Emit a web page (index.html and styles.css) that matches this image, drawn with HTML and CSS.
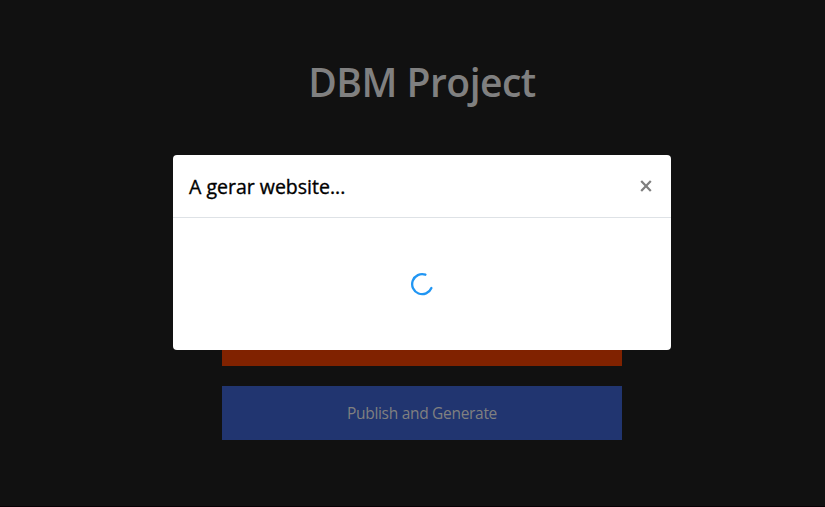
FILE: index.html
```html
<!DOCTYPE html>
<html lang="pt">
<head>
<meta charset="utf-8">
<title>DBM Project</title>
<link rel="stylesheet" href="styles.css">
</head>
<body>
<main class="page">
  <h1 class="title"><span>DBM Project</span></h1>
  <div class="actions">
    <button class="btn btn-generate" aria-label="Generate"></button>
    <button class="btn btn-publish"><span>Publish and Generate</span></button>
  </div>
</main>
<div class="overlay">
  <section class="modal" role="dialog">
    <header class="modal-header">
      <h2 class="modal-title"><span>A gerar website...</span></h2>
      <button class="close" aria-label="Close">
        <svg width="12" height="12" viewBox="0 0 12 12"><path d="M1.2 .9 10.8 11.1M10.8 .9 1.2 11.1" fill="none" stroke="#7f7f7f" stroke-width="2.2"/></svg>
      </button>
    </header>
    <div class="modal-body">
      <svg width="24" height="24" viewBox="0 0 24 24"><path d="M15.4 2.7A10 10 0 1 0 21.4 16" fill="none" stroke="#2196f3" stroke-width="2.3" stroke-linecap="round"/></svg>
    </div>
  </section>
</div>
</body>
</html>
```
FILE: styles.css
```css
* { box-sizing: border-box; }
html { overflow: hidden; }
body {
  margin: 0;
  height: 507px;
  overflow: hidden;
  background: #111;
  border-bottom: 1px solid #080004;
  font-family: "Open Sans", "Noto Sans", sans-serif;
}
.page {
  width: 844px;
  display: flex;
  flex-direction: column;
  align-items: center;
}
.title {
  margin: 58px 0 0;
  height: 48px;
  line-height: 47px;
  font-size: 39px;
  font-weight: 600;
  letter-spacing: -0.5px;
  color: #808080;
  white-space: nowrap;
}
.actions {
  margin-top: 206px;
  display: flex;
  flex-direction: column;
  gap: 20px;
}
.btn {
  width: 400px;
  height: 54px;
  padding: 0;
  border: 0;
  font: 400 15.5px/54px "Open Sans", "Noto Sans", sans-serif;
  letter-spacing: -0.3px;
  color: #808080;
}
.btn-generate { background: #802200; }
.btn-publish { background: #213570; }
.overlay {
  position: absolute;
  top: 0;
  left: 0;
  width: 844px;
  padding-top: 155px;
}
.modal {
  width: 498px;
  height: 195px;
  margin: 0 auto;
  background: #fff;
  border-radius: 4px;
}
.modal-header {
  display: flex;
  justify-content: space-between;
  align-items: center;
  height: 63px;
  padding: 0 19px 0 16px;
  border-bottom: 1px solid #dee2e6;
}
.modal-title {
  margin: 2px 0 0;
  font-size: 19.5px;
  font-weight: 500;
  line-height: 30px;
  color: #000;
  -webkit-text-stroke: 0.35px #000;
  white-space: nowrap;
}
.close {
  display: flex;
  padding: 0;
  border: 0;
  background: none;
}
.modal-body {
  display: flex;
  justify-content: center;
  align-items: center;
  height: 132px;
}
```
